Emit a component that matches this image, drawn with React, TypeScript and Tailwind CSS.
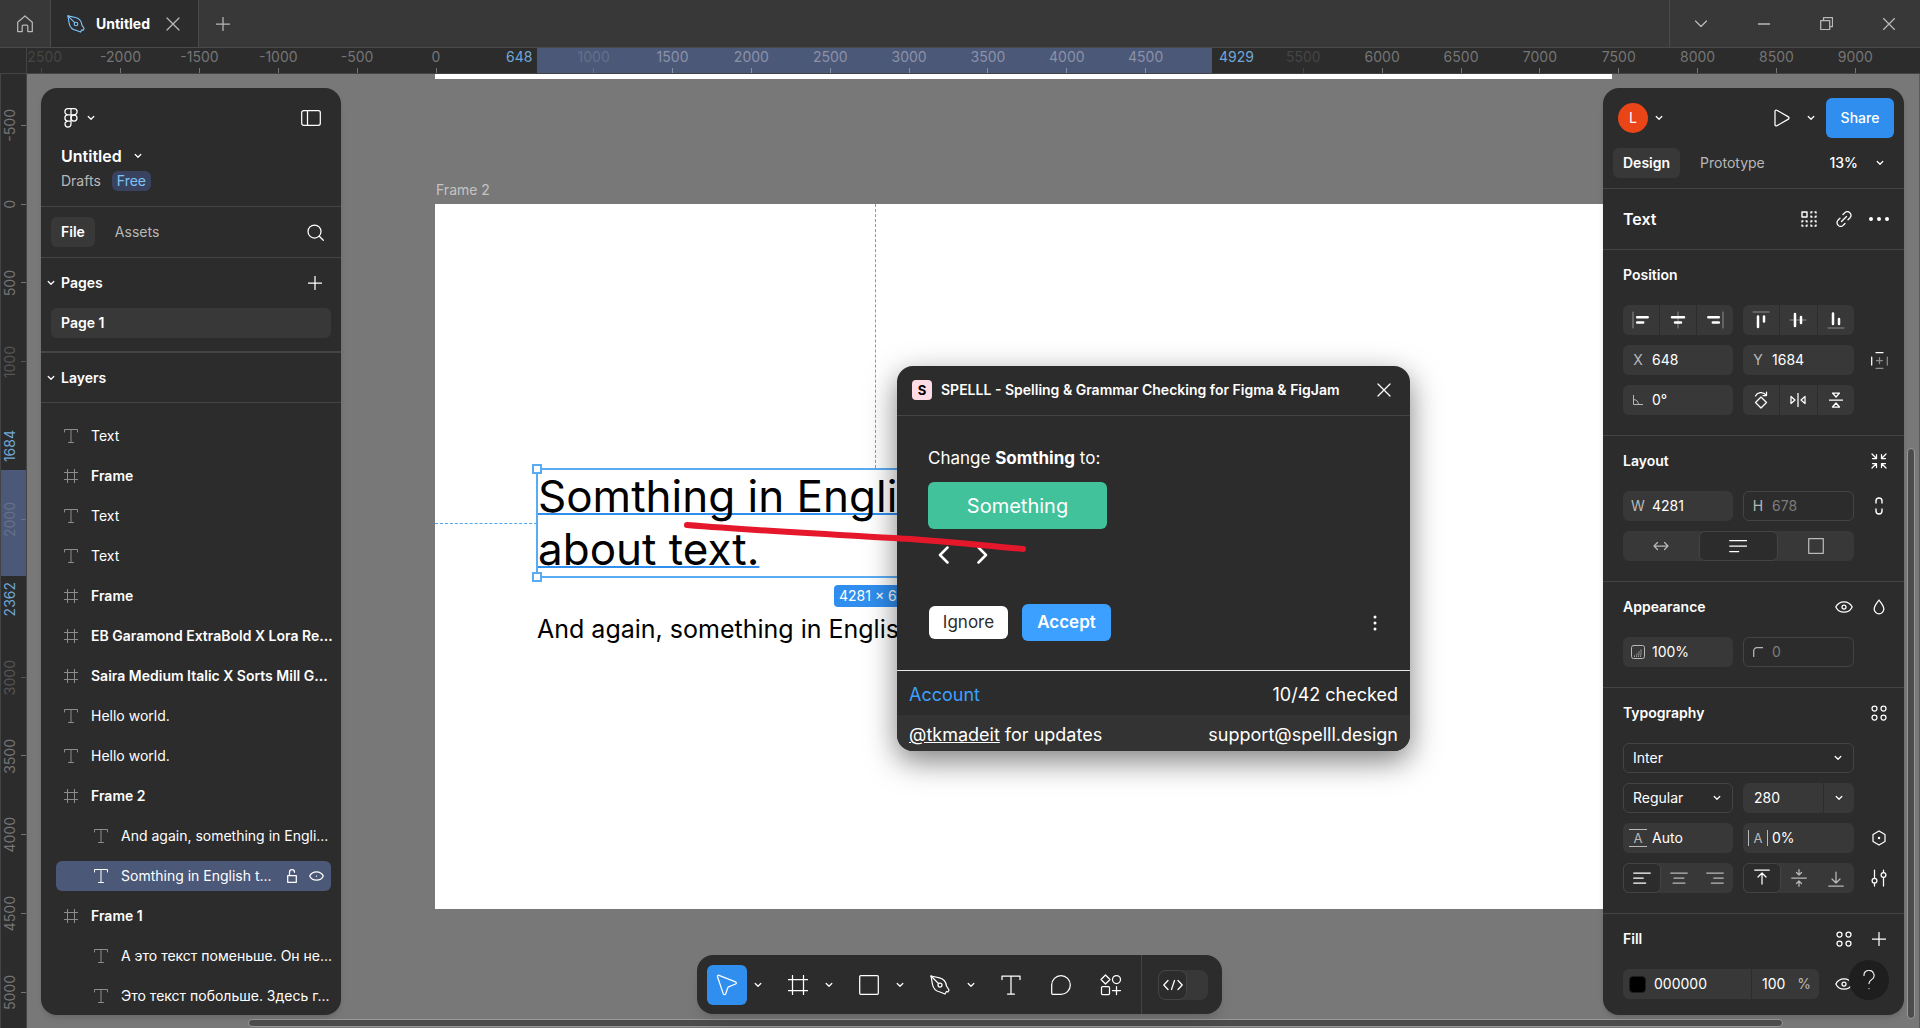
import type { ReactNode } from "react";

const PX_PER_UNIT = 0.1577;
const ORIGIN_X = 435;
const ORIGIN_Y = 130;

type IconProps = {
  w?: number;
  h?: number;
  sw?: number;
  className?: string;
  children: ReactNode;
};

const Icon = ({ w = 20, h = 20, sw = 1.25, className = "", children }: IconProps) => (
  <svg
    width={w}
    height={h}
    viewBox={`0 0 ${w} ${h}`}
    fill="none"
    stroke="currentColor"
    strokeWidth={sw}
    strokeLinecap="round"
    strokeLinejoin="round"
    className={`shrink-0 ${className}`}
    aria-hidden="true"
  >
    {children}
  </svg>
);

const Chevron = ({ className = "" }: { className?: string }) => (
  <Icon w={8} h={6} className={className}>
    <path d="M1.200 1.500L4 4.300l2.800-2.800" />
  </Icon>
);

const Plus = ({ className = "" }: { className?: string }) => (
  <Icon w={14} h={14} className={className}>
    <path d="M7 .5v13M.5 7h13" />
  </Icon>
);

const Close = ({ className = "" }: { className?: string }) => (
  <Icon w={14} h={14} className={className}>
    <path d="M1 1l12 12M13 1L1 13" />
  </Icon>
);

const TextIcon = () => (
  <Icon w={14} h={14} sw={1}>
    <path d="M.5 3V.5h13V3M7 .5v13M4.500 13.500h5" />
  </Icon>
);

const FrameIcon = () => (
  <Icon w={14} h={14} sw={1}>
    <path d="M3.500 0v14M10.500 0v14M0 3.500h14M0 10.500h14" />
  </Icon>
);

const Pen = ({ className = "" }: { className?: string }) => (
  <Icon className={className}>
    <path d="M1 1l8.500 1.800c4 1 6.500 3.500 7 8.200l2.500 4-1 2-1.500-.5-1.500 2.500-5-2C5 16 3.300 13.500 2.500 9.500L1 1z" />
    <path d="M1 1l7.500 7.500" />
    <circle cx="10" cy="10" r="2" />
  </Icon>
);

const Eye = ({ className = "" }: { className?: string }) => (
  <Icon w={18} h={12} className={className}>
    <path d="M.8 6C2.500 2.600 5.500.8 9 .8S15.500 2.600 17.200 6C15.500 9.400 12.500 11.200 9 11.200S2.500 9.400.8 6z" />
    <circle cx="9" cy="6" r="2" />
  </Icon>
);

const FourDots = () => (
  <Icon w={16} h={16}>
    <circle cx="3.500" cy="3.500" r="2.500" />
    <circle cx="12.500" cy="3.500" r="2.500" />
    <circle cx="3.500" cy="12.500" r="2.500" />
    <circle cx="12.500" cy="12.500" r="2.500" />
  </Icon>
);

const TitleBar = () => (
  <header className="flex h-12 shrink-0 border-b border-[#4a4a4a] bg-[#383838] text-[#b8b8b8]">
    <button aria-label="Home" className="flex w-[51px] items-center justify-center border-r border-[#4a4a4a]">
      <Icon w={16} h={18}>
        <path d="M.7 7.200L8 1l7.300 6.200v9.300h-4.500v-5.300a1 1 0 0 0-1-1H6.200a1 1 0 0 0-1 1v5.300H.7V7.200z" />
      </Icon>
    </button>
    <div className="flex w-[148px] items-center border-r border-[#4a4a4a] bg-[#2c2c2c] pl-4">
      <Pen className="h-[18px] w-[18px] text-[#7cc4f8]" />
      <span className="ml-[11px] w-[68px] text-sm font-bold text-white">Untitled</span>
      <button aria-label="Close tab" className="ml-[2px]">
        <Close />
      </button>
    </div>
    <button aria-label="New tab" className="flex w-12 items-center justify-center">
      <Plus />
    </button>
    <div className="ml-auto flex border-l border-[#4a4a4a]">
      <button aria-label="Tab list" className="flex w-[62px] items-center justify-center">
        <Icon w={12} h={8}>
          <path d="M.5 1L6 6.500 11.500 1" />
        </Icon>
      </button>
      <button aria-label="Minimize" className="flex w-[63px] items-center justify-center">
        <Icon w={12} h={2} sw={1.5}>
          <path d="M0 1h12" />
        </Icon>
      </button>
      <button aria-label="Restore" className="flex w-[62px] items-center justify-center">
        <Icon w={13} h={13}>
          <path d="M.7 3.500h9v9h-9zM3.500 3.500V.7h9v9H9.700" />
        </Icon>
      </button>
      <button aria-label="Close window" className="flex w-[63px] items-center justify-center">
        <Icon w={12} h={12}>
          <path d="M.5.5l11 11M11.500.5l-11 11" />
        </Icon>
      </button>
    </div>
  </header>
);

const xTicks = [
  -2500, -2000, -1500, -1000, -500, 0, 1000, 1500, 2000, 2500, 3000, 3500,
  4000, 4500, 5500, 6000, 6500, 7000, 7500, 8000, 8500, 9000,
];
const yTicks = [-500, 0, 500, 1000, 2000, 3000, 3500, 4000, 4500, 5000];

const xColor = (v: number) => {
  if (v === -2500 || v === 5500) return "text-[#454545]";
  if (v === 1000) return "text-[#66708a]";
  if (v > 648 && v < 4929) return "text-[#8a92a8]";
  return "text-[#757575]";
};

const yColor = (v: number) => {
  if (v === 2000) return "text-[#66708a]";
  if (v === 1000 || v === 3000) return "text-[#555555]";
  return "text-[#757575]";
};

const TopRuler = () => (
  <div className="relative h-[26px] shrink-0 overflow-hidden border-b border-[#444444] bg-[#2c2c2c] text-sm leading-[18px]">
    <div
      className="absolute inset-y-0 bg-[#4c5878]"
      style={{ left: ORIGIN_X + 648 * PX_PER_UNIT, width: 4281 * PX_PER_UNIT }}
    />
    {xTicks.map((v) => (
      <div
        key={v}
        className={`absolute inset-y-0 flex w-16 -translate-x-1/2 flex-col items-center justify-between ${xColor(v)}`}
        style={{ left: ORIGIN_X + 1 + v * PX_PER_UNIT }}
      >
        <span>{v}</span>
        <span className="h-[5px] w-px bg-current" />
      </div>
    ))}
    <span className="absolute left-[506px] text-[#6fa8d8]">648</span>
    <span className="absolute left-[1219px] text-[#6fa8d8]">4929</span>
    <div className="absolute inset-y-0 left-0 w-[27px] border-r border-[#444444] bg-[#2c2c2c]" />
  </div>
);

const LeftRuler = () => (
  <div className="relative w-[27px] shrink-0 overflow-hidden border-x border-[#444444] bg-[#2c2c2c] text-sm leading-[18px]">
    <div
      className="absolute inset-x-0 bg-[#4c5878]"
      style={{ top: ORIGIN_Y + 1684 * PX_PER_UNIT, height: 678 * PX_PER_UNIT }}
    />
    {yTicks.map((v) => (
      <div
        key={v}
        className={`absolute inset-x-0 flex h-16 -translate-y-1/2 items-center justify-between ${yColor(v)}`}
        style={{ top: ORIGIN_Y + v * PX_PER_UNIT }}
      >
        <span className="rotate-180 [writing-mode:vertical-rl]">{v}</span>
        <span className="h-px w-[5px] bg-current" />
      </div>
    ))}
    <span className="absolute top-[356px] rotate-180 text-[#6fa8d8] [writing-mode:vertical-rl]">1684</span>
    <span className="absolute top-[508px] rotate-180 text-[#6fa8d8] [writing-mode:vertical-rl]">2362</span>
  </div>
);

const Artboards = () => (
  <>
    <div className="absolute left-[408px] top-0 h-[5px] w-[1177px] bg-white" />
    <span className="absolute left-[409px] top-[106px] text-sm leading-5 text-[#c4c4c4]">Frame 2</span>
    <div className="absolute left-[408px] top-[130px] h-[705px] w-[1240px] bg-white text-black">
      <div className="absolute left-0 top-[319px] w-[102px] border-t border-dashed border-[#4fa8f5]" />
      <div className="absolute left-[440px] top-0 h-[264px] border-l border-dashed border-[#4fa8f5]" />
      <div className="absolute left-[101px] top-[264px] h-[110px] w-[675px] border-2 border-[#5aacf2]">
        <p className="whitespace-nowrap text-[44px] leading-[53px] underline decoration-[#2f8eee] decoration-2 underline-offset-1 [text-decoration-skip-ink:none]">
          Somthing in English to check
          <br />
          about text.
        </p>
        <span className="absolute -left-[6px] -top-[6px] h-[10px] w-[10px] border-2 border-[#5aacf2] bg-white" />
        <span className="absolute -bottom-[6px] -left-[6px] h-[10px] w-[10px] border-2 border-[#5aacf2] bg-white" />
      </div>
      <span className="absolute left-[399px] top-[381px] rounded-sm bg-[#2f8eee] px-[5px] text-sm leading-[22px] text-white">
        4281 × 678
      </span>
      <p className="absolute left-[102px] top-[410px] whitespace-nowrap text-[25px] leading-[30px]">
        And again, something in English
      </p>
    </div>
  </>
);

type Layer = { name: string; kind: "text" | "frame"; nested?: boolean; selected?: boolean };

const layers: Layer[] = [
  { name: "Text", kind: "text" },
  { name: "Frame", kind: "frame" },
  { name: "Text", kind: "text" },
  { name: "Text", kind: "text" },
  { name: "Frame", kind: "frame" },
  { name: "EB Garamond ExtraBold X Lora Re...", kind: "frame" },
  { name: "Saira Medium Italic X Sorts Mill G...", kind: "frame" },
  { name: "Hello world.", kind: "text" },
  { name: "Hello world.", kind: "text" },
  { name: "Frame 2", kind: "frame" },
  { name: "And again, something in Engli...", kind: "text", nested: true },
  { name: "Somthing in English t...", kind: "text", nested: true, selected: true },
  { name: "Frame 1", kind: "frame" },
  { name: "А это текст поменьше. Он не...", kind: "text", nested: true },
  { name: "Это текст побольше. Здесь г...", kind: "text", nested: true },
];

const LayerRow = ({ name, kind, nested, selected }: Layer) => (
  <li className="flex h-10 items-center pl-[15px] pr-[10px]">
    <div
      className={`flex h-[30px] w-full items-center rounded-md ${nested ? "pl-[38px]" : "pl-2"} ${
        selected ? "bg-[#4c5878]" : ""
      }`}
    >
      <span className={selected ? "text-white" : "text-[#8c8c8c]"}>
        {kind === "text" ? <TextIcon /> : <FrameIcon />}
      </span>
      <span className={`ml-[13px] whitespace-nowrap ${kind === "frame" ? "font-semibold" : ""}`}>{name}</span>
      {selected && (
        <span className="ml-auto mr-[7px] flex items-center gap-3">
          <button aria-label="Lock layer">
            <Icon w={10} h={14}>
              <path d="M.7 6.700h8.600v6.600H.7zM2.500 6.500V3.200a2.500 2.500 0 0 1 5 0" />
            </Icon>
          </button>
          <button aria-label="Hide layer">
            <Icon w={15} h={10}>
              <path d="M.7 5C2 2.200 4.500.8 7.500.8S13 2.200 14.300 5C13 7.800 10.500 9.200 7.500 9.200S2 7.800.7 5zM7.400 5h.2" />
            </Icon>
          </button>
        </span>
      )}
    </div>
  </li>
);

const LeftPanel = () => (
  <aside className="flex w-[300px] flex-col overflow-hidden rounded-2xl bg-[#2c2c2c] shadow-md">
    <div className="h-[119px] shrink-0 border-b border-[#444444] pl-5 pr-5">
      <div className="flex h-[60px] items-center">
        <button aria-label="Main menu" className="ml-[3px] flex items-center gap-[3px]">
          <Icon>
            <path d="M7 .7H4a3 3 0 0 0 0 6.200h3V.7zM7 .7h3a3 3 0 0 1 0 6.200H7M7 6.900H4a3 3 0 0 0 0 6.200h3V6.900zM7 13.100H4a3 3 0 1 0 3 3v-3z" />
            <circle cx="10" cy="10" r="3" />
          </Icon>
          <Chevron />
        </button>
        <button aria-label="Minimize UI" className="ml-auto">
          <Icon h={16}>
            <rect x=".7" y=".7" width="18.600" height="14.600" rx="2" />
            <path d="M6.500.7v14.600" />
          </Icon>
        </button>
      </div>
      <button className="-mt-1 flex h-6 items-center gap-3 text-base font-semibold">
        Untitled
        <Chevron />
      </button>
      <div className="mt-[3px] flex items-center gap-[11px] text-sm leading-5 text-[#b8b8b8]">
        Drafts
        <span className="rounded-md bg-[#394360] px-[5px] text-[#7cc4f8]">Free</span>
      </div>
    </div>
    <div className="flex h-[51px] shrink-0 items-center border-b border-[#444444] pl-[10px] pr-[17px]">
      <button className="h-[30px] rounded-md bg-[#383838] px-[10px] font-semibold">File</button>
      <button className="ml-[10px] h-[30px] px-[10px] text-[#b8b8b8]">Assets</button>
      <button aria-label="Search" className="ml-auto">
        <Icon w={17} h={17}>
          <circle cx="7.500" cy="7.500" r="6.500" />
          <path d="M12.300 12.300l4 4" />
        </Icon>
      </button>
    </div>
    <div className="h-[95px] shrink-0 border-b-2 border-[#444444] px-[10px]">
      <div className="flex h-[50px] items-center pr-[9px]">
        <button className="-ml-[4px] flex items-center gap-[6px] font-semibold">
          <Chevron />
          Pages
        </button>
        <button aria-label="Add page" className="ml-auto">
          <Plus />
        </button>
      </div>
      <button className="h-[30px] w-full rounded-md bg-[#383838] px-[10px] text-left font-semibold">
        Page 1
      </button>
    </div>
    <div className="flex h-[50px] shrink-0 items-center border-b border-[#444444] px-[6px]">
      <button className="flex items-center gap-[6px] font-semibold">
        <Chevron />
        Layers
      </button>
    </div>
    <ul className="min-h-0 flex-1 overflow-hidden pt-[13px]">
      {layers.map((l, i) => (
        <LayerRow key={i.toString()} {...l} />
      ))}
    </ul>
  </aside>
);

type FieldProps = {
  label: string;
  icon: ReactNode;
  value: string;
  outlined?: boolean;
};

const Field = ({ label, icon, value, outlined }: FieldProps) => (
  <label
    className={`flex h-[30px] items-center rounded-md border ${
      outlined ? "border-[#444444] text-[#7c7c7c]" : "border-transparent bg-[#383838]"
    }`}
  >
    <span className="flex w-7 shrink-0 justify-center text-[#b8b8b8]">{icon}</span>
    <input aria-label={label} defaultValue={value} className="w-full min-w-0 bg-transparent outline-none" />
  </label>
);

type Item = { label: string; icon: ReactNode };

const ButtonGroup = ({ items }: { items: Item[] }) => (
  <div className="flex h-[30px] gap-px overflow-hidden rounded-md">
    {items.map((it) => (
      <button key={it.label} aria-label={it.label} className="flex flex-1 items-center justify-center bg-[#383838]">
        {it.icon}
      </button>
    ))}
  </div>
);

const Segmented = ({ items, active, wide }: { items: Item[]; active: number; wide?: boolean }) => (
  <div className={`flex h-[30px] rounded-md bg-[#383838] ${wide ? "col-span-2" : ""}`}>
    {items.map((it, i) => (
      <button
        key={it.label}
        aria-label={it.label}
        aria-pressed={i === active}
        className={`flex flex-1 items-center justify-center rounded-md ${
          i === active ? "border border-[#444444] bg-[#2c2c2c]" : "text-[#b8b8b8]"
        }`}
      >
        {it.icon}
      </button>
    ))}
  </div>
);

const Picker = ({ label, value, wide }: { label: string; value: string; wide?: boolean }) => (
  <div className={`relative h-[30px] ${wide ? "col-span-2" : ""}`}>
    <select
      aria-label={label}
      defaultValue={value}
      className="h-full w-full appearance-none rounded-md border border-[#444444] bg-[#2c2c2c] px-[9px] outline-none"
    >
      <option>{value}</option>
    </select>
    <Chevron className="pointer-events-none absolute right-3 top-3" />
  </div>
);

type SectionProps = { title: string; actions?: ReactNode; children: ReactNode; last?: boolean };

const Section = ({ title, actions, children, last }: SectionProps) => (
  <section className={`pb-5 pl-5 pr-[10px] ${last ? "" : "border-b border-[#444444]"}`}>
    <div className="mb-[5px] flex h-[50px] items-center">
      <h2 className="font-semibold">{title}</h2>
      <div className="ml-auto flex items-center gap-[5px]">{actions}</div>
    </div>
    <div className="grid grid-cols-[110px_111px_1fr] gap-[10px]">{children}</div>
  </section>
);

const IconButton = ({ label, children, className = "" }: { label: string; children: ReactNode; className?: string }) => (
  <button aria-label={label} className={`flex h-[30px] w-[30px] items-center justify-center ${className}`}>
    {children}
  </button>
);

const alignH: Item[] = [
  {
    label: "Align left",
    icon: (
      <Icon w={18} h={18} sw={2.5}>
        <path d="M1 1v16" strokeWidth="1" stroke="#8c8c8c" />
        <path d="M5.200 6.300h10.500M5.200 11.600h6" />
      </Icon>
    ),
  },
  {
    label: "Align horizontal centers",
    icon: (
      <Icon w={18} h={18} sw={2.5}>
        <path d="M9 1v16" strokeWidth="1" stroke="#8c8c8c" />
        <path d="M3 6.300h12M6 11.600h6" />
      </Icon>
    ),
  },
  {
    label: "Align right",
    icon: (
      <Icon w={18} h={18} sw={2.5}>
        <path d="M17 1v16" strokeWidth="1" stroke="#8c8c8c" />
        <path d="M2.300 6.300h10.500M6.800 11.600h6" />
      </Icon>
    ),
  },
];

const alignV: Item[] = [
  {
    label: "Align top",
    icon: (
      <Icon w={18} h={18} sw={2.5}>
        <path d="M1 1h16" strokeWidth="1" stroke="#8c8c8c" />
        <path d="M6 5.500v10.500M12 5.500v5" />
      </Icon>
    ),
  },
  {
    label: "Align vertical centers",
    icon: (
      <Icon w={18} h={18} sw={2.5}>
        <path d="M1 9h16" strokeWidth="1" stroke="#8c8c8c" />
        <path d="M6 3v12M12 6v6" />
      </Icon>
    ),
  },
  {
    label: "Align bottom",
    icon: (
      <Icon w={18} h={18} sw={2.5}>
        <path d="M1 17h16" strokeWidth="1" stroke="#8c8c8c" />
        <path d="M6 2.500v10.500M12 8v5" />
      </Icon>
    ),
  },
];

const transforms: Item[] = [
  {
    label: "Rotate 90° right",
    icon: (
      <Icon w={14} h={18}>
        <path d="M7 6l5.500 5.500L7 17l-5.500-5.500z" />
        <path d="M1.500 5C3 1.500 8.500 0 12 4M12.500 1v3.500H9" />
      </Icon>
    ),
  },
  {
    label: "Flip horizontal",
    icon: (
      <Icon w={16} h={14}>
        <path d="M8 0v14M1 3.500v7L5 7zM15 3.500v7L11 7z" />
      </Icon>
    ),
  },
  {
    label: "Flip vertical",
    icon: (
      <Icon w={14} h={16}>
        <path d="M0 8h14M3.500 1h7L7 5zM3.500 15h7L7 11z" />
      </Icon>
    ),
  },
];

const resizing: Item[] = [
  {
    label: "Auto width",
    icon: (
      <Icon w={16} h={10}>
        <path d="M1 5h14M4.500 1.500L1 5l3.500 3.500M11.500 1.500L15 5l-3.500 3.500" />
      </Icon>
    ),
  },
  {
    label: "Auto height",
    icon: (
      <Icon w={18} h={14}>
        <path d="M.7 1.500h17M.7 7h17M.7 12.500h9" />
      </Icon>
    ),
  },
  {
    label: "Fixed size",
    icon: (
      <Icon w={16} h={16}>
        <rect x=".7" y=".7" width="14.600" height="14.600" />
      </Icon>
    ),
  },
];

const textAlign: Item[] = [
  {
    label: "Text align left",
    icon: (
      <Icon w={18} h={12}>
        <path d="M.7 1h16.600M.7 6h9.600M.7 11h12" />
      </Icon>
    ),
  },
  {
    label: "Text align center",
    icon: (
      <Icon w={18} h={12}>
        <path d="M.7 1h16.600M4 6h10M3 11h12" />
      </Icon>
    ),
  },
  {
    label: "Text align right",
    icon: (
      <Icon w={18} h={12}>
        <path d="M.7 1h16.600M7.700 6h9.600M5.300 11h12" />
      </Icon>
    ),
  },
];

const textAlignV: Item[] = [
  {
    label: "Text align top",
    icon: (
      <Icon w={16} h={18}>
        <path d="M.7 1h14.600M8 4v11M4 8l4-4 4 4" />
      </Icon>
    ),
  },
  {
    label: "Text align middle",
    icon: (
      <Icon w={16} h={18}>
        <path d="M.7 9h14.600M8 .7v5M5.500 3.500L8 6l2.500-2.500M8 17.300v-5M5.500 14.500L8 12l2.500 2.500" />
      </Icon>
    ),
  },
  {
    label: "Text align bottom",
    icon: (
      <Icon w={16} h={18}>
        <path d="M.7 17h14.600M8 3v11M4 10l4 4 4-4" />
      </Icon>
    ),
  },
];

const RightPanel = () => (
  <aside className="relative w-[301px] overflow-hidden rounded-2xl bg-[#2c2c2c] shadow-md">
    <div className="h-[101px] border-b border-[#444444] px-[10px]">
      <div className="flex h-[60px] items-center pl-[5px]">
        <span className="flex h-[30px] w-[30px] items-center justify-center rounded-full bg-[#ea4517]">L</span>
        <button aria-label="Account menu" className="ml-[7px]">
          <Chevron />
        </button>
        <button aria-label="Present" className="ml-auto">
          <Icon w={16} h={18}>
            <path d="M1 2.200v13.600c0 .9 1 1.500 1.800 1l11.600-6.700c.8-.4.8-1.700 0-2.200L2.800 1.200C2 .7 1 1.300 1 2.200z" />
          </Icon>
        </button>
        <button aria-label="Present options" className="ml-[17px]">
          <Chevron />
        </button>
        <button className="ml-[11px] h-10 w-[68px] rounded-md bg-[#2f8eee] font-medium">Share</button>
      </div>
      <div className="flex h-[30px] items-center">
        <button className="h-[30px] rounded-md bg-[#383838] px-[10px] font-semibold">Design</button>
        <button className="ml-[10px] h-[30px] px-[10px] text-[#b8b8b8]">Prototype</button>
        <button className="ml-auto mr-[10px] flex items-center gap-[18px] font-medium">
          13%
          <Chevron />
        </button>
      </div>
    </div>
    <div className="flex h-[61px] items-center border-b border-[#444444] pl-5 pr-[10px]">
      <h2 className="text-base font-semibold">Text</h2>
      <div className="ml-auto flex gap-[5px]">
        <IconButton label="Create component">
          <Icon w={16} h={16} sw={1.4}>
            <path d="M1 1h5v5H1z" />
            <path
              d="M10 2.500V1h1.500M13.500 1H15v1.500M15 4.500V6h-1.500M11.500 6H10V4.500M1 11.500V10h1.500M4.500 10H6v1.500M6 13.500V15H4.500M2.500 15H1v-1.500M10 11.500V10h1.500M13.500 10H15v1.500M15 13.500V15h-1.500M11.500 15H10v-1.500"
              strokeLinecap="butt"
            />
          </Icon>
        </IconButton>
        <IconButton label="Link">
          <Icon w={16} h={16}>
            <path d="M7 3.500l1.800-1.800a3.300 3.300 0 0 1 5 0 3.500 3.500 0 0 1 .3 5L12 8.800M9 12.500l-1.800 1.800a3.300 3.300 0 0 1-5 0 3.500 3.500 0 0 1-.3-5L4 7.200M5.500 10.500l5-5" />
          </Icon>
        </IconButton>
        <IconButton label="More">
          <Icon w={20} h={4} sw={4}>
            <path d="M2 2h0M10 2h0M18 2h0" />
          </Icon>
        </IconButton>
      </div>
    </div>

    <Section title="Position">
      <ButtonGroup items={alignH} />
      <ButtonGroup items={alignV} />
      <span />
      <Field label="X" icon="X" value="648" />
      <Field label="Y" icon="Y" value="1684" />
      <IconButton label="Constraints">
        <Icon w={17} h={17} className="text-[#8c8c8c]">
          <path d="M8.500 5.500v6M5.500 8.500h6M5 16.300h7M16.300 5v8" />
          <path d="M.7 5v8M5 .7h7" stroke="#fff" />
        </Icon>
      </IconButton>
      <Field
        label="Rotation"
        icon={
          <Icon w={10} h={10} sw={1}>
            <path d="M.5 0v9.500H10M.5 4.500c3 0 5 2 5 5" />
          </Icon>
        }
        value="0°"
      />
      <ButtonGroup items={transforms} />
    </Section>

    <Section
      title="Layout"
      actions={
        <IconButton label="Resize to fit">
          <Icon w={16} h={16}>
            <path d="M1 1l4 4M5.500 1.500v4h-4M15 1l-4 4M10.500 1.500v4h4M1 15l4-4M1.500 10.500h4v4M15 15l-4-4M14.500 10.500h-4v4" />
          </Icon>
        </IconButton>
      }
    >
      <Field label="Width" icon="W" value="4281" />
      <Field label="Height" icon="H" value="678" outlined />
      <IconButton label="Lock aspect ratio">
        <Icon w={8} h={18} sw={1.4}>
          <path d="M1 6V4a3 3 0 0 1 6 0v2M1 12v2a3 3 0 0 0 6 0v-2" />
        </Icon>
      </IconButton>
      <Segmented items={resizing} active={1} wide />
    </Section>

    <Section
      title="Appearance"
      actions={
        <>
          <IconButton label="Toggle visibility">
            <Eye />
          </IconButton>
          <IconButton label="Blend mode">
            <Icon w={12} h={16}>
              <path d="M6 1C4 4 1.200 6.500 1.200 10a4.800 4.800 0 0 0 9.600 0C10.800 6.500 8 4 6 1z" />
            </Icon>
          </IconButton>
        </>
      }
    >
      <Field
        label="Opacity"
        icon={
          <Icon w={14} h={14} sw={1}>
            <rect x=".5" y=".5" width="13" height="13" rx="2" />
            <path d="M3 11h8M5.500 9h5.500M7.500 7H11M9.500 5H11" strokeDasharray="1 1" strokeLinecap="butt" strokeWidth="1.250" />
          </Icon>
        }
        value="100%"
      />
      <Field
        label="Corner radius"
        icon={
          <Icon w={10} h={10}>
            <path d="M.7 9.500V4A3.300 3.300 0 0 1 4 .7h5.500" />
          </Icon>
        }
        value="0"
        outlined
      />
    </Section>

    <Section
      title="Typography"
      actions={
        <IconButton label="Text styles">
          <FourDots />
        </IconButton>
      }
    >
      <Picker label="Font family" value="Inter" wide />
      <span />
      <Picker label="Font weight" value="Regular" />
      <div className="flex h-[30px] gap-px overflow-hidden rounded-md">
        <input aria-label="Font size" defaultValue="280" className="w-full min-w-0 bg-[#383838] px-[11px] outline-none" />
        <button aria-label="Font size options" className="flex w-[30px] shrink-0 items-center justify-center bg-[#383838]">
          <Chevron />
        </button>
      </div>
      <span />
      <Field
        label="Line height"
        icon={
          <span className="flex h-[18px] w-[18px] items-center justify-center border-y border-[#b8b8b8] text-[13px]">A</span>
        }
        value="Auto"
      />
      <Field
        label="Letter spacing"
        icon={
          <span className="flex h-4 w-5 items-center justify-center border-x border-[#b8b8b8] text-[13px]">A</span>
        }
        value="0%"
      />
      <IconButton label="Variables">
        <Icon w={14} h={16}>
          <path d="M7 1l6 3.500v7L7 15l-6-3.500v-7z" />
          <path d="M7 8h0" strokeWidth="2.500" />
        </Icon>
      </IconButton>
      <Segmented items={textAlign} active={0} />
      <Segmented items={textAlignV} active={0} />
      <IconButton label="Type settings">
        <Icon w={16} h={18}>
          <path d="M3.500 1v8M3.500 14v3M12.500 1v2.500M12.500 8.500V17" />
          <circle cx="3.500" cy="11.700" r="2.400" />
          <circle cx="12.500" cy="6" r="2.400" />
        </Icon>
      </IconButton>
    </Section>

    <Section
      title="Fill"
      last
      actions={
        <>
          <IconButton label="Fill styles">
            <FourDots />
          </IconButton>
          <IconButton label="Add fill">
            <Plus />
          </IconButton>
        </>
      }
    >
      <div className="col-span-3 flex items-center">
        <div className="flex h-[30px] w-[196px] gap-px overflow-hidden rounded-md">
          <label className="flex flex-1 items-center gap-2 bg-[#383838] pl-[6px]">
            <span className="h-[17px] w-[17px] shrink-0 rounded-sm border border-[#1e1e1e] bg-black" />
            <input aria-label="Fill color" defaultValue="000000" className="w-full min-w-0 bg-transparent outline-none" />
          </label>
          <label className="flex w-[67px] items-center bg-[#383838] pl-[10px] pr-2">
            <input aria-label="Fill opacity" defaultValue="100" className="w-full min-w-0 bg-transparent outline-none" />
            <span className="text-[#b8b8b8]">%</span>
          </label>
        </div>
        <IconButton label="Hide fill" className="ml-[10px]">
          <Eye />
        </IconButton>
      </div>
    </Section>

    <button
      aria-label="Help"
      className="absolute bottom-[15px] right-[15px] flex h-10 w-10 items-center justify-center rounded-full bg-[#1e1e1e] text-[#e6e6e6]"
    >
      <Icon w={12} h={20}>
        <path d="M1 5.500a5 5 0 1 1 7.500 4.200C6.800 10.700 6 11.500 6 13.500M6 18.500h0" />
      </Icon>
    </button>
  </aside>
);

const PluginWindow = () => (
  <div
    role="dialog"
    aria-label="SPELLL"
    className="absolute left-[870px] top-[292px] w-[513px] overflow-hidden rounded-2xl bg-[#2c2c2c] shadow-[0_10px_30px_rgba(0,0,0,0.5)]"
  >
    <div className="flex h-[50px] items-center border-b border-[#444444] pb-px pl-[15px] pr-[19px]">
      <span className="flex h-5 w-5 items-center justify-center rounded bg-[#ffdbe6] text-[13px] font-bold text-black">
        S
      </span>
      <h1 className="ml-[9px] whitespace-nowrap font-semibold">
        SPELLL - Spelling &amp; Grammar Checking for Figma &amp; FigJam
      </h1>
      <button aria-label="Close plugin" className="ml-auto">
        <Close />
      </button>
    </div>
    <div className="px-[31px] pb-[29px] pt-[30px]">
      <p className="text-[17px] leading-6">
        Change <b>Somthing</b> to:
      </p>
      <button className="mt-3 block h-[47px] w-[179px] rounded-md bg-[#41c29b] text-xl">Something</button>
      <div className="mt-[17px] flex gap-[28px] pl-[10px]">
        <button aria-label="Previous">
          <Icon w={11} h={18} sw={2.5}>
            <path d="M9.500 1.500L2 9l7.500 7.500" />
          </Icon>
        </button>
        <button aria-label="Next">
          <Icon w={11} h={18} sw={2.5}>
            <path d="M1.500 1.500L9 9l-7.500 7.500" />
          </Icon>
        </button>
      </div>
      <div className="mt-[40px] flex items-center pl-px pr-[2px] text-[17px]">
        <button className="h-[33px] w-[79px] rounded-md bg-white text-[#2c2c2c]">Ignore</button>
        <button className="ml-[14px] h-[37px] w-[89px] rounded-md bg-[#3ba0ff] font-semibold">Accept</button>
        <button aria-label="More options" className="ml-auto">
          <Icon w={4} h={16} sw={3}>
            <path d="M2 2h0M2 8h0M2 14h0" />
          </Icon>
        </button>
      </div>
    </div>
    <div className="flex h-[45px] items-center justify-between border-t border-[#e6e6e6] px-3 pt-1 text-lg">
      <a href="#account" className="text-[#3ba0ff]">
        Account
      </a>
      <span>10/42 checked</span>
    </div>
    <div className="flex h-9 items-center justify-between bg-[#333333] px-3 pt-1 text-lg">
      <span>
        <a href="#updates" className="underline">
          @tkmadeit
        </a>{" "}
        for updates
      </span>
      <span>support@spelll.design</span>
    </div>
  </div>
);

const tools = [
  {
    label: "Move",
    menu: true,
    icon: (
      <Icon w={22} h={22}>
        <path d="M1.500 2.700l5.800 17.200c.4 1.100 1.900 1.100 2.300.1l2.200-6.300c.1-.4.4-.7.8-.9l7-2.800c1-.4 1-1.800-.1-2.200L3 1.300c-.9-.3-1.800.5-1.500 1.400z" />
      </Icon>
    ),
  },
  {
    label: "Frame",
    menu: true,
    icon: (
      <Icon>
        <path d="M4.500.5v19M15.500.5v19M.5 4.500h19M.5 15.500h19" />
      </Icon>
    ),
  },
  {
    label: "Rectangle",
    menu: true,
    icon: (
      <Icon>
        <rect x=".7" y=".7" width="18.600" height="18.600" rx="1" />
      </Icon>
    ),
  },
  { label: "Pen", menu: true, icon: <Pen /> },
  {
    label: "Text",
    icon: (
      <Icon>
        <path d="M1 4.500V1h18v3.500M10 1v18M6.500 19h7" />
      </Icon>
    ),
  },
  {
    label: "Comment",
    icon: (
      <Icon>
        <path d="M10 .7A9.300 9.300 0 1 1 10 19.300H1.700a1 1 0 0 1-1-1V10A9.300 9.300 0 0 1 10 .7z" />
      </Icon>
    ),
  },
  {
    label: "Actions",
    icon: (
      <Icon w={22} h={22}>
        <path d="M5.500 1l4.500 4.500L5.500 10 1 5.500zM16.500 12.500v8M12.500 16.500h8" />
        <circle cx="16.500" cy="5.500" r="4" />
        <rect x="1.500" y="12.500" width="8" height="8" rx="1" />
      </Icon>
    ),
  },
];

const Toolbar = () => (
  <div className="pointer-events-none absolute inset-x-0 bottom-[14px] flex justify-center pr-[27px]">
    <div className="pointer-events-auto flex h-[59px] items-center gap-[10px] rounded-2xl bg-[#2c2c2c] pl-[10px] pr-[14px] shadow-lg">
      {tools.map((t) => (
        <div key={t.label} className="flex items-center">
          <button
            aria-label={t.label}
            className={`flex h-10 w-10 items-center justify-center rounded-md ${
              t.label === "Move" ? "bg-[#2f8eee]" : ""
            }`}
          >
            {t.icon}
          </button>
          {t.menu && (
            <button aria-label={`${t.label} tools`} className="flex h-10 w-[21px] items-center justify-center">
              <Chevron />
            </button>
          )}
        </div>
      ))}
      <div className="flex h-full items-center border-l border-[#444444] pl-4">
        <button role="switch" aria-checked="false" aria-label="Dev Mode" className="flex h-[30px] w-[50px] rounded-lg bg-[#383838]">
          <span className="flex h-full w-[29px] items-center justify-center rounded-lg border border-[#444444] bg-[#2c2c2c]">
            <Icon h={12}>
              <path d="M5 1.500L.8 6 5 10.500M15 1.500L19.200 6 15 10.500M11.500 1.500l-3 9" />
            </Icon>
          </span>
        </button>
      </div>
    </div>
  </div>
);

const App = () => (
  <div className="flex h-screen flex-col overflow-hidden bg-[#787878] font-['Inter',sans-serif] text-sm text-white">
    <TitleBar />
    <TopRuler />
    <div className="flex min-h-0 flex-1">
      <LeftRuler />
      <main className="relative min-w-0 flex-1 overflow-hidden border-r border-[#5a5a5a]">
        <Artboards />
        <div className="absolute bottom-px left-[221px] right-[136px] h-2 rounded-full border border-[#999999] bg-[#4c4c4c]" />
        <div className="absolute bottom-[9px] right-1 top-[374px] w-2 rounded-full border border-[#999999] bg-[#4c4c4c]" />
        <div className="absolute inset-0 flex justify-between pb-[13px] pl-[14px] pr-[15px] pt-[14px]">
          <LeftPanel />
          <RightPanel />
        </div>
        <Toolbar />
        <PluginWindow />
        <svg
          width="350"
          height="40"
          className="pointer-events-none absolute left-[654px] top-[444px]"
          fill="none"
          stroke="#e5172b"
          strokeWidth="6"
          strokeLinecap="round"
          aria-hidden="true"
        >
          <path d="M6 7C80 13 160 17 230 21C270 24 310 28 342 31" />
        </svg>
      </main>
    </div>
  </div>
);

export default App;
